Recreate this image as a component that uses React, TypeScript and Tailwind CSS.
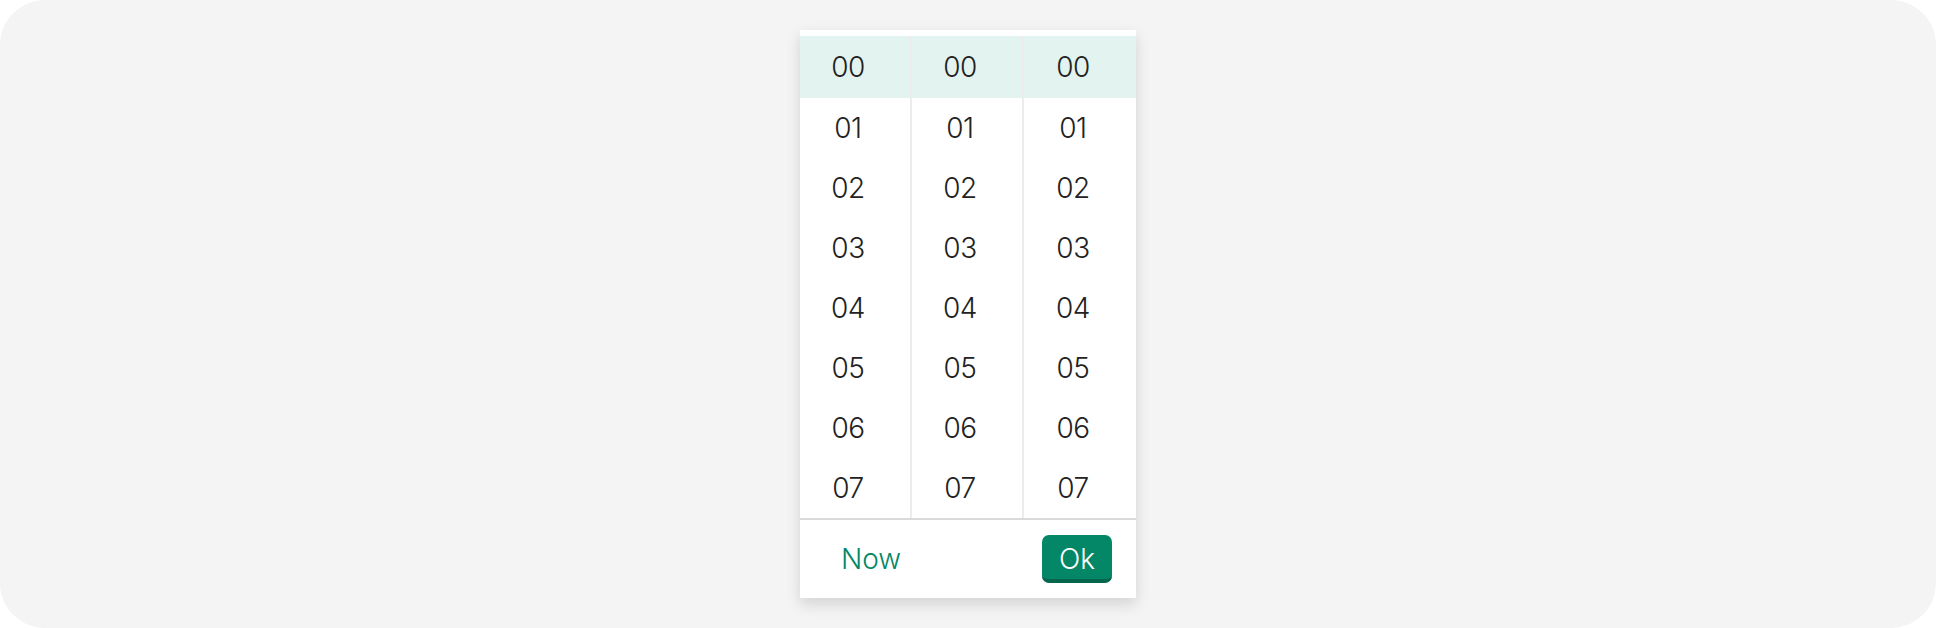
const rows = ["00", "01", "02", "03", "04", "05", "06", "07"]

const Column = ({ last = false }: { last?: boolean }) => (
  <div className={`flex flex-col ${last ? "" : "border-r-2 border-[#ececec]"}`}>
    {rows.map((r, i) => (
      <div
        key={r}
        className={`flex items-center justify-center pr-[14px] text-[28px] font-[350] tracking-[-0.5px] text-[#222222] ${
          i === 0 ? "h-[62px] bg-[#e3f3ef]" : "h-[60px]"
        }`}
      >
        {r}
      </div>
    ))}
  </div>
)

export default function App() {
  return (
    <div className="w-[1936px] h-[628px] bg-white">
      <div
        className="w-full h-full bg-[#f4f4f4] rounded-[45px] flex justify-center pt-[30px]"
        style={{ fontFamily: "Inter, 'Noto Sans', sans-serif" }}
      >
        <div className="w-[336px] h-[568px] bg-white shadow-[0_6px_14px_rgba(0,0,0,0.14)] flex flex-col">
          <div className="h-[6px]" />
          <div className="grid grid-cols-[112px_112px_112px]">
            <Column />
            <Column />
            <Column last />
          </div>
          <div className="border-t-2 border-[#d9d9d9] flex-1 flex items-center justify-between pl-[41px] pr-[24px]">
            <button className="text-[28px] font-[350] text-[#038766] leading-none">Now</button>
            <button className="w-[70px] h-[48px] rounded-[7px] bg-[#038766] border-b-4 border-[#05664d] text-white text-[28px] font-[350] leading-none flex items-center justify-center pt-[3px]">
              Ok
            </button>
          </div>
        </div>
      </div>
    </div>
  )
}
